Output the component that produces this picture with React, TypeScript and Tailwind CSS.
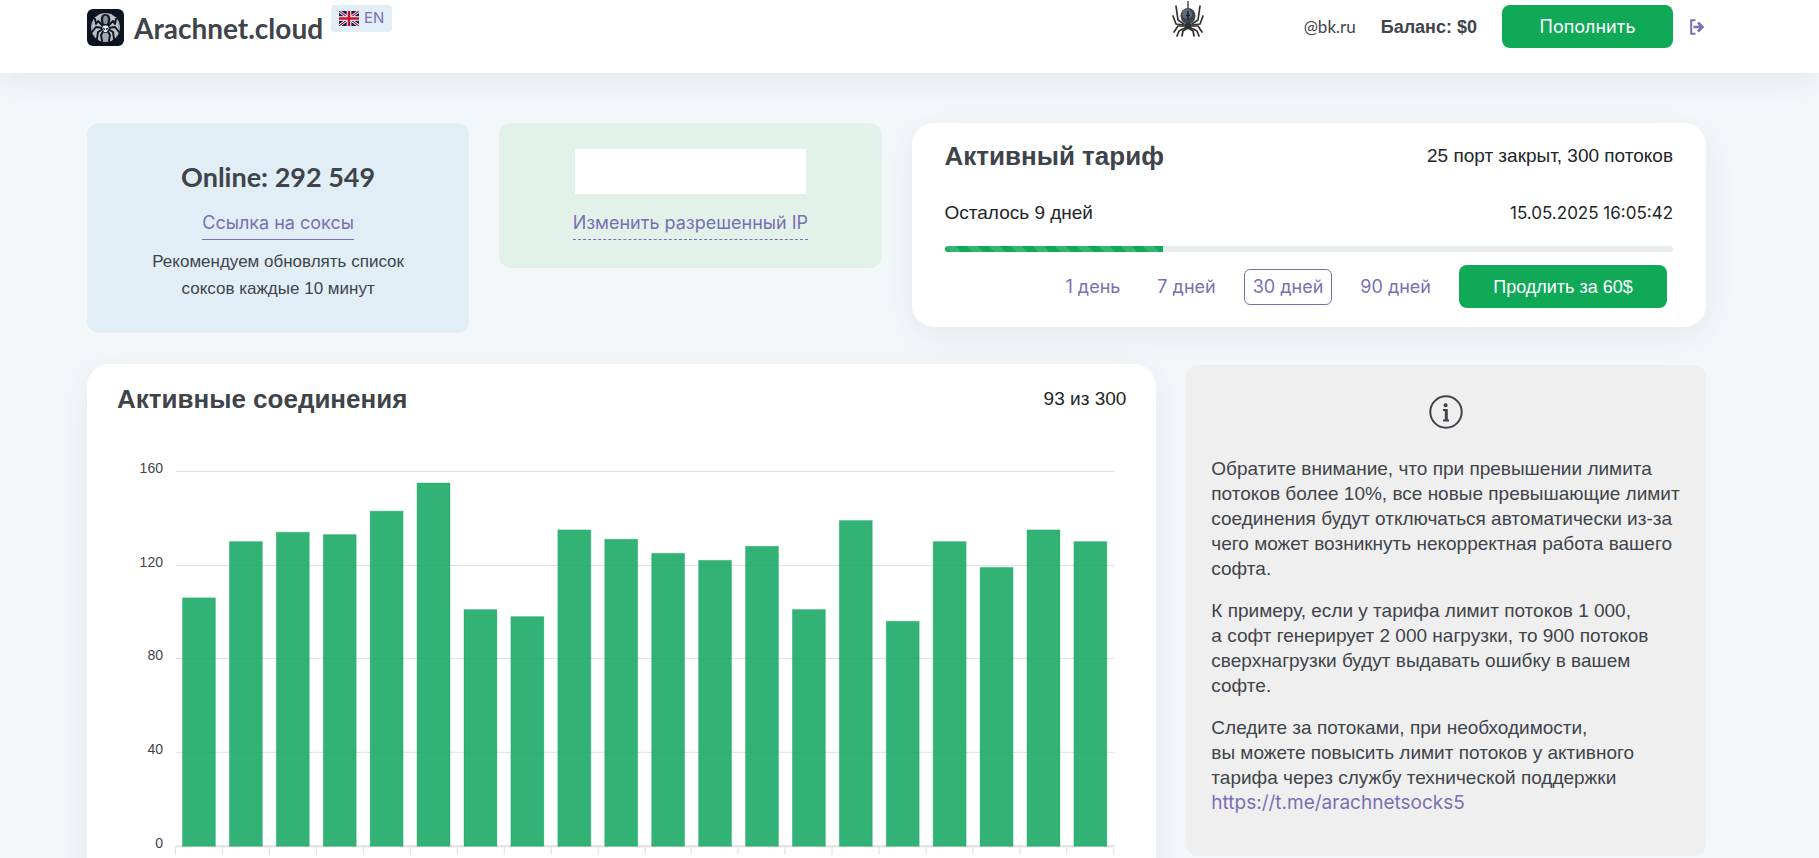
import { useState } from "react";

const VALUES = [106, 130, 134, 133, 143, 155, 101, 98, 135, 131, 125, 122, 128, 101, 139, 96, 130, 119, 135, 130];
const TICKS = [160, 120, 80, 40, 0];
const PERIODS = ["1 день", "7 дней", "30 дней", "90 дней"];

function SpiderLogo() {
  return (
    <svg viewBox="0 0 37 37" className="size-[37px] shrink-0" aria-hidden="true">
      <rect width="37" height="37" rx="6" fill="#0b1420" />
      <circle cx="18.5" cy="18.5" r="14.5" fill="#a4a8ac" />
      <path
        d="M7 11v15M9 8v21M11 7v23M13 5v27M24 5v27M26 7v23M28 8v21M30 11v15"
        stroke="#dfe1e3"
        strokeWidth="0.9"
      />
      <g fill="none" stroke="#0b1420" strokeWidth="1.900" strokeLinejoin="round" strokeLinecap="round">
        <path d="M16 17 11 12 9 15 8 10M21 17 26 12 28 15 29 10" />
        <path d="M16 19 9 18 5 23M21 19 28 18 32 23" />
        <path d="M16 20 11 23 10 30M21 20 26 23 27 30" />
        <path d="M17 21 14 26 15 32M20 21 23 26 22 32" />
      </g>
      <path d="M18.500 5c4 0 5.500 4 4.500 8l-2 5h-5l-2-5c-1-4 .5-8 4.500-8z" fill="#141c26" />
      <ellipse cx="18.500" cy="11" rx="2.400" ry="4.200" fill="#8a9199" />
      <path d="M18.500 16c2.600 0 3.800 1.600 3.500 3.600-.3 1.400-1.500 1.800-1.700 3.900h-3.600c-.2-2.100-1.400-2.500-1.700-3.900-.3-2 .9-3.600 3.500-3.600z" fill="#e6e8ea" stroke="#0b1420" strokeWidth="0.800" />
      <path d="m16 19.200 1.900 1.300M21 19.200l-1.900 1.300" stroke="#0b1420" strokeWidth="1.200" />
    </svg>
  );
}

function HangingSpider() {
  return (
    <svg viewBox="0 0 38 37" className="h-[37px] w-[38px]" aria-hidden="true">
      <path d="M19 0v9" stroke="#3b4045" strokeWidth="1.4" />
      <g fill="none" stroke="#34322f" strokeWidth="1.700" strokeLinejoin="round" strokeLinecap="round">
        <path d="M15 23 9 19 7 5M23 23 29 19 31 5" />
        <path d="M15 24 7 23 4 15M23 24 31 23 34 15" />
        <path d="M15 25 9 25 5 31M23 25 29 25 33 31" />
        <path d="M16 27 10 30 8 35M22 27 28 30 30 35" />
        <path d="M17 28 14 30 13 35M21 28 24 30 25 35" />
      </g>
      <ellipse cx="19" cy="15" rx="7.500" ry="8" fill="#3d4650" />
      <ellipse cx="18" cy="13" rx="5" ry="5" fill="#5f6a76" />
      <path d="M19 10v9M17 14.500h4" stroke="#1d232a" strokeWidth="1.600" />
      <ellipse cx="19" cy="25" rx="3.600" ry="3.500" fill="#2b2f34" />
    </svg>
  );
}

function FlagUk() {
  return (
    <svg viewBox="0 0 60 45" className="h-[15px] w-5" aria-hidden="true">
      <rect width="60" height="45" fill="#012169" />
      <path d="m0 0 60 45M60 0 0 45" stroke="#fff" strokeWidth="8" />
      <path d="m0 0 60 45M60 0 0 45" stroke="#c8102e" strokeWidth="3.500" />
      <path d="M30 0v45M0 22.500h60" stroke="#fff" strokeWidth="14" />
      <path d="M30 0v45M0 22.500h60" stroke="#c8102e" strokeWidth="8" />
    </svg>
  );
}

function LogoutIcon() {
  return (
    <svg viewBox="0 0 14 16" className="h-4 w-3.5" aria-hidden="true">
      <path d="M5.500 1.200H1.200v13.600h4.300" fill="none" stroke="#7a6fb5" strokeWidth="2" />
      <path d="M3.500 8h8M8 3.500 12.500 8 8 12.500" fill="none" stroke="#7a6fb5" strokeWidth="2.600" />
    </svg>
  );
}

function InfoIcon() {
  return (
    <svg viewBox="0 0 34 34" className="size-[34px]" aria-hidden="true">
      <circle cx="17" cy="17" r="15.700" fill="none" stroke="#3e444a" strokeWidth="2" />
      <circle cx="16.600" cy="10.200" r="2" fill="#3e444a" />
      <path d="M14 15h3.400v10.500M14 25.500h6" fill="none" stroke="#3e444a" strokeWidth="2" />
      <path d="M17.200 14v11.500" stroke="#3e444a" strokeWidth="2.800" />
    </svg>
  );
}

function ConnectionsChart() {
  const left = 59;
  const slot = 46.95;
  const base = 385;
  const unit = 2.345;
  return (
    <svg viewBox="0 0 1010 430" className="block w-full" role="img" aria-label="Активные соединения">
      {TICKS.map((t) => (
        <g key={t}>
          <text x={left - 13} y={base - t * unit + 2} textAnchor="end" fontSize="14" fill="#3e444a">
            {t}
          </text>
          <path d={`M${left} ${Math.round(base - t * unit) + 0.5}H998`} stroke="#e0e0e0" strokeWidth={t === 0 ? 2 : 1} />
        </g>
      ))}
      {VALUES.map((v, i) => (
        <rect
          key={i}
          x={left + i * slot + 6.5}
          y={base - v * unit + 0.5}
          width="33"
          height={v * unit}
          fill="#0ea55c"
          fillOpacity="0.85"
          stroke="#0ea55c"
          strokeOpacity="0.3"
          strokeWidth="1"
        />
      ))}
      {Array.from({ length: 21 }, (_, i) => (
        <path key={i} d={`M${Math.round(left + i * slot) - 0.5} ${base + 1}v8`} stroke="#e0e0e0" />
      ))}
    </svg>
  );
}

export default function App() {
  const [period, setPeriod] = useState("30 дней");

  return (
    <div className="h-screen overflow-hidden bg-[#f3f7fa] font-['Liberation_Sans',sans-serif] text-[19px] text-[#3e444a]">
      <header className="flex items-start justify-between bg-white pt-[5px] pr-[115px] pb-[25px] pl-[87px] shadow-[0_8px_32px_rgba(60,50,90,0.08)]">
        <div className="flex items-start">
          <a href="#" className="flex items-center gap-2.5 pt-1">
            <SpiderLogo />
            <span className="font-['Lato','Liberation_Sans',sans-serif] text-[28px] leading-9 font-bold">Arachnet.cloud</span>
          </a>
          <a href="#" className="ml-2 flex h-[27px] items-center gap-[5px] rounded bg-[#e2eef6] px-2 font-['Inter',sans-serif] text-[15px] text-[#7a6fb5]">
            <FlagUk />
            EN
          </a>
        </div>
        <div className="flex h-[43px] items-center">
          <div className="mr-[97px] -mt-[15px]">
            <HangingSpider />
          </div>
          <span className="mr-[25px] font-['Lato','Liberation_Sans',sans-serif] text-[17px]">@bk.ru</span>
          <span className="mr-[25px] text-lg font-bold">Баланс: $0</span>
          <button type="button" className="h-[43px] w-[171px] rounded-lg bg-[#0fa958] font-['Inter',sans-serif] text-lg text-white">
            Пополнить
          </button>
          <a href="#" aria-label="Выйти" className="ml-[17px]">
            <LogoutIcon />
          </a>
        </div>
      </header>

      <main className="grid grid-cols-12 items-start gap-x-[30px] gap-y-[31px] pt-[50px] pr-[113px] pl-[87px]">
        <section className="col-span-3 flex flex-col items-center rounded-xl bg-[#e2eef6] px-8 pt-[34px] pb-[31px] text-center">
          <h2 className="font-['Lato','Liberation_Sans',sans-serif] text-[27px] leading-10 font-bold">Online: 292 549</h2>
          <a href="#" className="mt-2.5 border-b border-[#7a6fb5] font-['Inter',sans-serif] text-lg leading-8 text-[#7a6fb5]">
            Ссылка на соксы
          </a>
          <p className="mt-2 max-w-[270px] text-[17px] leading-[27px]">
            Рекомендуем обновлять список соксов каждые 10 минут
          </p>
        </section>

        <section className="col-span-3 flex flex-col items-center rounded-xl bg-[#e2f2e9] px-8 pt-[26px] pb-7">
          <div className="h-[45px] w-[231px] bg-white" />
          <a href="#" className="mt-[13px] border-b border-dashed border-[#7a6fb5] font-['Inter',sans-serif] text-lg leading-8 text-[#7a6fb5]">
            Изменить разрешенный IP
          </a>
        </section>

        <section className="col-span-6 rounded-[22px] bg-white px-[33px] pt-[15px] pb-[19px] shadow-[0_8px_32px_rgba(60,50,90,0.08)]">
          <div className="flex items-center justify-between">
            <h2 className="text-[26px] leading-9 font-bold">Активный тариф</h2>
            <span className="text-[#212529]">25 порт закрыт, 300 потоков</span>
          </div>
          <div className="mt-[26px] flex items-center justify-between leading-[26px] text-[#212529]">
            <span>Осталось 9 дней</span>
            <span className="font-['Inter',sans-serif] text-[17px]">15.05.2025 16:05:42</span>
          </div>
          <div className="mt-5 h-1.5 overflow-hidden rounded bg-[#e9ecef]">
            <div className="h-full w-[30%] bg-[#0fa958] bg-[linear-gradient(45deg,rgba(255,255,255,0.15)_25%,transparent_25%,transparent_50%,rgba(255,255,255,0.15)_50%,rgba(255,255,255,0.15)_75%,transparent_75%,transparent)] bg-[length:22px_22px]" />
          </div>
          <div className="mt-[13px] flex items-center justify-end gap-[19px] pr-1.5">
            {PERIODS.map((p) => (
              <button
                key={p}
                type="button"
                aria-pressed={p === period}
                onClick={() => setPeriod(p)}
                className={`h-9 rounded-md border px-2 font-['Inter',sans-serif] text-lg text-[#7a6fb5] ${p === period ? "border-[#7a6fb5]" : "border-transparent"}`}
              >
                {p}
              </button>
            ))}
            <button type="button" className="h-[43px] w-52 rounded-lg bg-[#0fa958] text-lg text-white">
              Продлить за 60$
            </button>
          </div>
        </section>

        <section className="col-span-8 rounded-[22px] bg-white px-[30px] pt-[17px] pb-8 shadow-[0_8px_32px_rgba(60,50,90,0.08)]">
          <div className="flex items-center justify-between">
            <h2 className="text-[26px] leading-9 font-bold">Активные соединения</h2>
            <span className="text-[#212529]">93 из 300</span>
          </div>
          <div className="mt-11">
            <ConnectionsChart />
          </div>
        </section>

        <section className="col-span-4 mt-px rounded-xl bg-[#efefef] px-[25px] pt-[30px] pb-[41px]">
          <div className="flex justify-center">
            <InfoIcon />
          </div>
          <div className="mt-[27px] flex flex-col gap-[17px] leading-[25px]">
            <p>
              Обратите внимание, что при превышении лимита
              <br />
              потоков более 10%, все новые превышающие лимит
              <br />
              соединения будут отключаться автоматически из-за
              <br />
              чего может возникнуть некорректная работа вашего
              <br />
              софта.
            </p>
            <p>
              К примеру, если у тарифа лимит потоков 1 000,
              <br />а софт генерирует 2 000 нагрузки, то 900 потоков
              <br />
              сверхнагрузки будут выдавать ошибку в вашем
              <br />
              софте.
            </p>
            <p>
              Следите за потоками, при необходимости,
              <br />
              вы можете повысить лимит потоков у активного
              <br />
              тарифа через службу технической поддержки
              <br />
              <a href="https://t.me/arachnetsocks5" className="font-['Inter',sans-serif] text-[#7a6fb5]">
                https://t.me/arachnetsocks5
              </a>
            </p>
          </div>
        </section>
      </main>
    </div>
  );
}
